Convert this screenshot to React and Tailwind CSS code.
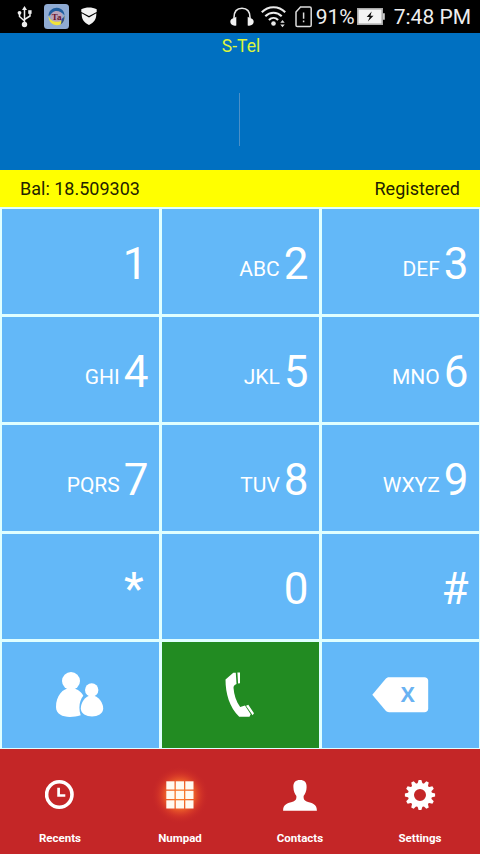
import clsx from "clsx";

const keys = [
  { digit: "1", letters: "" },
  { digit: "2", letters: "ABC" },
  { digit: "3", letters: "DEF" },
  { digit: "4", letters: "GHI" },
  { digit: "5", letters: "JKL" },
  { digit: "6", letters: "MNO" },
  { digit: "7", letters: "PQRS" },
  { digit: "8", letters: "TUV" },
  { digit: "9", letters: "WXYZ" },
  { digit: "*", letters: "" },
  { digit: "0", letters: "" },
  { digit: "#", letters: "" },
];

const UsbIcon = () => (
  <svg width="16" height="22" viewBox="0 0 16 22" fill="none" stroke="#eee" strokeWidth="1.5">
    <path d="M7.5 3v15M2.5 7v3.5l5 4.5M13 6v4l-5.5 3.5" />
    <path d="M7.5 0 10 4H5z" fill="#eee" stroke="none" />
    <circle cx="2.5" cy="6.8" r="1.9" fill="#eee" stroke="none" />
    <path d="M11.2 4.2h3.4v3.6h-3.4z" fill="#eee" stroke="none" />
    <circle cx="7.5" cy="18.5" r="2.7" fill="#eee" stroke="none" />
  </svg>
);

const AppBadge = () => (
  <svg width="25" height="25" viewBox="0 0 25 25">
    <rect width="25" height="25" rx="3.5" fill="#8fabd3" />
    <circle cx="12.5" cy="12.2" r="6" fill="#b9a3b8" />
    <path d="M4.5 12C4.5 5 12 1.8 17 5c2.5 1.5 3.5 4 3.5 6.5C17 7 11.5 5.5 8 9c-1.5 1.5-2 2.5-3.5 3z" fill="#1f5d9e" />
    <path d="M4.5 12c0 7 6 11 12 8.5 3-1.5 4.5-5 4-9-1.5 4.5-4 6.5-8 6.3-4-.2-6-2-8-5.8z" fill="#f1e43a" />
    <path d="M20.5 11.5c.4 4-1 7.5-4 9 1-2 1-4.5 1-5.5 1.5-1 2.5-2 3-3.5z" fill="#2c4d93" />
    <text x="7.8" y="15.5" fill="#65122f" fontSize="9" fontWeight="700" fontFamily="Liberation Serif, serif">Ta</text>
  </svg>
);

const ShieldIcon = () => (
  <svg width="16" height="19" viewBox="0 0 16 19" fill="#f2f2f2">
    <path d="M.3 2.2C5 0 11 0 15.7 2.2V5L8 9 .3 5z" />
    <path d="M.7 6.3 8 10.5l7.3-4.2c.3 5.7-2.3 9.5-7.3 11.7C3 15.8.4 12 .7 6.3z" />
  </svg>
);

const HeadphonesIcon = () => (
  <svg width="24" height="20" viewBox="0 0 24 20">
    <path d="M4 14v-3.500C4 4.500 7 1.200 12 1.200s8 3.300 8 9.300V14" fill="none" stroke="#e8e8e8" strokeWidth="1.6" />
    <path d="M6.3 9.8v8.700c-3.300.8-6-1-6-3.700 0-2.400 1.700-3.300 3.500-3.600zM17.700 9.800v8.700c3.300.8 6-1 6-3.700 0-2.400-1.700-3.300-3.500-3.600z" fill="#f2f2f2" />
  </svg>
);

const WifiIcon = () => (
  <svg width="25" height="22" viewBox="0 0 25 22">
    <g fill="none" stroke="#eaeaea" strokeWidth="2.1">
      <path d="M.8 6.3c6.5-6.7 16.900-6.700 23.400 0" />
      <path d="M4.300 10.200c4.700-4.700 11.700-4.700 16.400 0" />
      <path d="M7.900 13.900c2.700-2.500 6.500-2.500 9.200 0" />
    </g>
    <circle cx="12.5" cy="17.5" r="2.3" fill="#eaeaea" />
    <path d="m21.500 14 2.200 2.800h-4.400zM21.500 21.300l2.200-2.800h-4.400z" fill="#ddd" />
  </svg>
);

const SimIcon = () => (
  <svg width="17" height="22" viewBox="0 0 17 22" fill="none" stroke="#ddd" strokeWidth="1.5">
    <path d="M5.500 1h9.300c.8 0 1.400.6 1.400 1.400v16.800c0 .8-.6 1.400-1.400 1.400H2.400c-.8 0-1.400-.6-1.400-1.400V6z" />
    <path d="M8.600 6.500v6.300M8.600 14.500v1.800" />
  </svg>
);

const BatteryIcon = () => (
  <svg width="28" height="17" viewBox="0 0 28 17">
    <rect x=".8" y=".8" width="24.4" height="15.4" fill="#f4f4f4" stroke="#aaa" strokeWidth="1.6" />
    <path d="M26 5.300h1.800v6.400H26z" fill="#ccc" />
    <path d="m14.700 3.500-5 5.400h3l-1.800 4.600 5.600-5.800h-3z" fill="#111" />
  </svg>
);

const PeopleIcon = () => (
  <svg width="48" height="46" viewBox="0 0 48 46" fill="#fff">
    <circle cx="15" cy="9" r="9" />
    <path d="M15 16c4.500 0 10 3 12.300 7.800-3.500 4.200-5.300 11.700-2.600 19.400C14 46.500 0 45.500 0 35c0-11 6.500-19 15-19z" />
    <circle cx="35.7" cy="18" r="6.7" />
    <path d="M35.700 23.500c7 0 11.500 7.500 11.500 13 0 10.500-22.400 10.500-22.400 0 0-5.500 4-13 10.900-13z" />
  </svg>
);

const CallIcon = () => (
  <svg width="30" height="46" viewBox="0 0 30 46" fill="#fff">
    <path d="M8.300.8h2.500L11.500 12c-2 .8-3 2-3 3.800.5 7.500 2.700 13.500 6.700 19.300l4.800-1.600 5.700 8.800-1.200 2.500H14.200C4.500 35 .5 22 .5 7.500z" />
    <path d="M12.400.5h2.600v10.700l-1.900.4zM21 33.700l2.300-1 5.700 8.600-1.400 1.900z" />
  </svg>
);

const ClearIcon = () => (
  <svg width="57" height="36" viewBox="0 0 57 36">
    <path d="M17 .3h35.500c2 0 3.700 1.500 3.700 3.500v27.900c0 2-1.700 3.500-3.700 3.500H17c-1.300 0-2.500-.7-3.500-1.700L.3 17.800 13.500 2C14.500.9 15.700.3 17 .3z" fill="#fff" />
    <text x="35.8" y="24.6" textAnchor="middle" fill="#69b2f2" fontSize="21" fontWeight="700" fontFamily="Open Sans, sans-serif">X</text>
  </svg>
);

const RecentsIcon = () => (
  <svg width="30" height="30" viewBox="0 0 30 30" fill="none" stroke="#fff">
    <circle cx="14.3" cy="14.5" r="12.7" strokeWidth="3.6" />
    <path d="M13.600 7.800v7.700h6.700" strokeWidth="2.7" />
  </svg>
);

const NumpadIcon = () => (
  <svg width="28" height="28" viewBox="0 0 28 28" className="overflow-visible">
    <defs>
      <radialGradient id="glow">
        <stop offset="0" stopColor="#ff8a2b" />
        <stop offset=".5" stopColor="#f0622a" stopOpacity=".9" />
        <stop offset=".75" stopColor="#dd3d28" stopOpacity=".45" />
        <stop offset="1" stopColor="#c42627" stopOpacity="0" />
      </radialGradient>
    </defs>
    <circle cx="14" cy="14" r="29" fill="url(#glow)" />
    {[0.3, 9.8, 19.3].map((y) =>
      [0.3, 9.8, 19.3].map((x) => <rect key={`${x}-${y}`} x={x} y={y} width="8.2" height="8.2" fill="#fffaf0" />)
    )}
  </svg>
);

const ContactIcon = () => (
  <svg width="34" height="31" viewBox="0 0 34 31" fill="#fff">
    <path d="M17 0c4.500 0 6.800 2.300 6.600 7.300-.1 4-1.300 6.700-3 8.700-.2 3 .5 4.500 3 5.400 6.500 2 10.300 2.600 10.300 9.300H.1c0-6.700 3.800-7.300 10.300-9.300 2.500-.9 3.200-2.400 3-5.400-1.700-2-2.900-4.700-3-8.700C10.200 2.300 12.500 0 17 0z" />
  </svg>
);

const SettingsIcon = () => (
  <svg width="32" height="32" viewBox="0 0 32 32">
    {Array.from({ length: 12 }, (_, i) => (
      <path key={i} d="M13.400 5 14.600.9h2.800L18.600 5z" fill="#fff" transform={`rotate(${i * 30} 16 16)`} />
    ))}
    <circle cx="16" cy="16" r="9" fill="none" stroke="#fff" strokeWidth="6" />
  </svg>
);

const tabs = [
  { label: "Recents", icon: <RecentsIcon /> },
  { label: "Numpad", icon: <NumpadIcon /> },
  { label: "Contacts", icon: <ContactIcon /> },
  { label: "Settings", icon: <SettingsIcon /> },
];

function StatusBar() {
  return (
    <div className="flex h-[33px] items-center justify-between bg-black pl-[17px] pr-[9px] text-[21px] text-[#eee]">
      <div className="flex items-center">
        <UsbIcon />
        <div className="ml-[11px]">
          <AppBadge />
        </div>
        <div className="ml-3">
          <ShieldIcon />
        </div>
      </div>
      <div className="flex items-center">
        <HeadphonesIcon />
        <div className="ml-[7px]">
          <WifiIcon />
        </div>
        <div className="ml-[9px]">
          <SimIcon />
        </div>
        <span className="ml-1 w-[41px] whitespace-nowrap pt-0.5">91%</span>
        <BatteryIcon />
        <span className="ml-[9px] whitespace-nowrap pt-0.5">7:48 PM</span>
      </div>
    </div>
  );
}

function App() {
  return (
    <div className="flex h-[854px] w-[480px] flex-col overflow-hidden bg-[#e0ffff] font-['Roboto',sans-serif]">
      <StatusBar />
      <div className="flex h-[137px] flex-col items-center bg-[#0070c1]">
        <p className="pl-0.5 pt-px text-[17.5px] leading-6 text-[#dcf53e]">S-Tel</p>
        <div className="mr-0.5 mt-[35px] h-[53px] w-px bg-[#4a90c8]" />
      </div>
      <div className="flex h-[37px] items-center justify-between bg-[#ffff00] px-5 text-lg text-[#222200]">
        <span>Bal: 18.509303</span>
        <span>Registered</span>
      </div>

      <div className="grid h-[542px] grid-cols-3 grid-rows-5 gap-[3px] p-[1.5px]">
        {keys.map((key) => (
          <button
            key={key.digit}
            className="flex items-start justify-end gap-1 bg-[#63b8f8] pr-[10px] pt-[29px] text-white"
          >
            <span className="pt-[19px] text-[21px] leading-[25px]">{key.letters}</span>
            <span
              className={clsx(
                "text-[44px] leading-[52px]",
                key.digit === "*" && "mr-[5px] font-medium",
                key.digit === "1" && "mr-px"
              )}
            >
              {key.digit}
            </span>
          </button>
        ))}
        <button className="flex items-center justify-center bg-[#63b8f8] pt-px" aria-label="Contacts list">
          <PeopleIcon />
        </button>
        <button className="flex items-center justify-center bg-[#228b22] pt-px" aria-label="Call">
          <CallIcon />
        </button>
        <button className="flex items-center justify-center bg-[#63b8f8] pt-px" aria-label="Delete">
          <ClearIcon />
        </button>
      </div>

      <nav className="grid h-[105px] grid-cols-4 bg-[#c42627]">
        {tabs.map((tab) => (
          <div key={tab.label} className="flex flex-col items-center pt-[30px] text-white">
            <div className="flex h-8 items-center">{tab.icon}</div>
            <span className="mt-[19px] text-[11.5px] font-bold leading-4">{tab.label}</span>
          </div>
        ))}
      </nav>
    </div>
  );
}

export default App;
